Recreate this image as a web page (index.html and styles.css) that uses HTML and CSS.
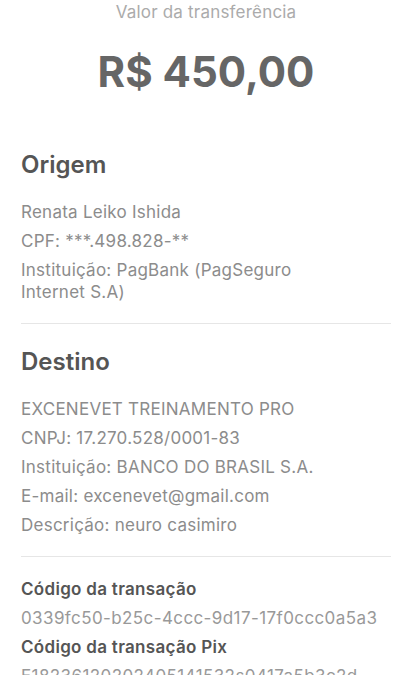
FILE: index.html
```html
<!DOCTYPE html>
<html lang="pt-BR">
<head>
    <meta charset="UTF-8">
    <meta name="viewport" content="width=device-width, initial-scale=1.0">
    <title>Comprovante de transferência</title>
    <link rel="stylesheet" href="styles.css">
</head>
<body>

<div class="receipt">
    <div class="summary">
        <p class="summary-label">Valor da transferência</p>
        <p class="summary-amount">R$ 450,00</p>
    </div>

    <div class="section">
        <h2 class="section-title">Origem</h2>
        <ul class="info-list">
            <li>Renata Leiko Ishida</li>
            <li>CPF: ***.498.828-**</li>
            <li class="wrap">Instituição: PagBank (PagSeguro Internet S.A)</li>
        </ul>
    </div>

    <div class="section">
        <h2 class="section-title">Destino</h2>
        <ul class="info-list">
            <li>EXCENEVET TREINAMENTO PRO</li>
            <li>CNPJ: 17.270.528/0001-83</li>
            <li>Instituição: BANCO DO BRASIL S.A.</li>
            <li>E-mail: excenevet@gmail.com</li>
            <li>Descrição: neuro casimiro</li>
        </ul>
    </div>

    <div class="codes">
        <div class="code">
            <h3 class="code-label">Código da transação</h3>
            <p class="code-value">0339fc50-b25c-4ccc-9d17-17f0ccc0a5a3</p>
        </div>
        <div class="code">
            <h3 class="code-label">Código da transação Pix</h3>
            <p class="code-value">E18236120202405141532s0417a5b3c2d</p>
        </div>
    </div>
</div>

</body>
</html>
```

FILE: styles.css
```css
body {
    margin: 0;
    background-color: #ffffff;
    font-family: Inter, "Noto Sans", sans-serif;
}

.receipt {
    padding: 0 21px;
}

.summary {
    text-align: center;
    padding-bottom: 52px;
}

.summary-label {
    margin: 0;
    font-size: 17px;
    line-height: 24px;
    letter-spacing: 0.2px;
    color: #ababab;
}

.summary-amount {
    margin: 22px 0 0;
    font-size: 42px;
    line-height: 52px;
    font-weight: 700;
    color: #666666;
}

.section {
    border-bottom: 1px solid #e6e6e6;
    padding-bottom: 20px;
    margin-bottom: 23px;
}

.section-title {
    margin: 0;
    font-size: 24px;
    line-height: 30px;
    font-weight: 600;
    color: #555555;
}

.info-list {
    list-style: none;
    margin: 21px 0 0;
    padding: 0;
    display: flex;
    flex-direction: column;
    gap: 7px;
}

.info-list li {
    font-size: 17px;
    line-height: 22px;
    letter-spacing: 0.25px;
    color: #8c8c8c;
}

.info-list .wrap {
    max-width: 300px;
}

.codes {
    margin-top: -2px;
    display: flex;
    flex-direction: column;
    gap: 7px;
}

.code-label {
    margin: 0;
    font-size: 17px;
    line-height: 22px;
    letter-spacing: 0.3px;
    font-weight: 600;
    color: #555555;
}

.code-value {
    margin: 7px 0 0;
    font-size: 17px;
    line-height: 22px;
    letter-spacing: 0.4px;
    color: #999999;
}
```
